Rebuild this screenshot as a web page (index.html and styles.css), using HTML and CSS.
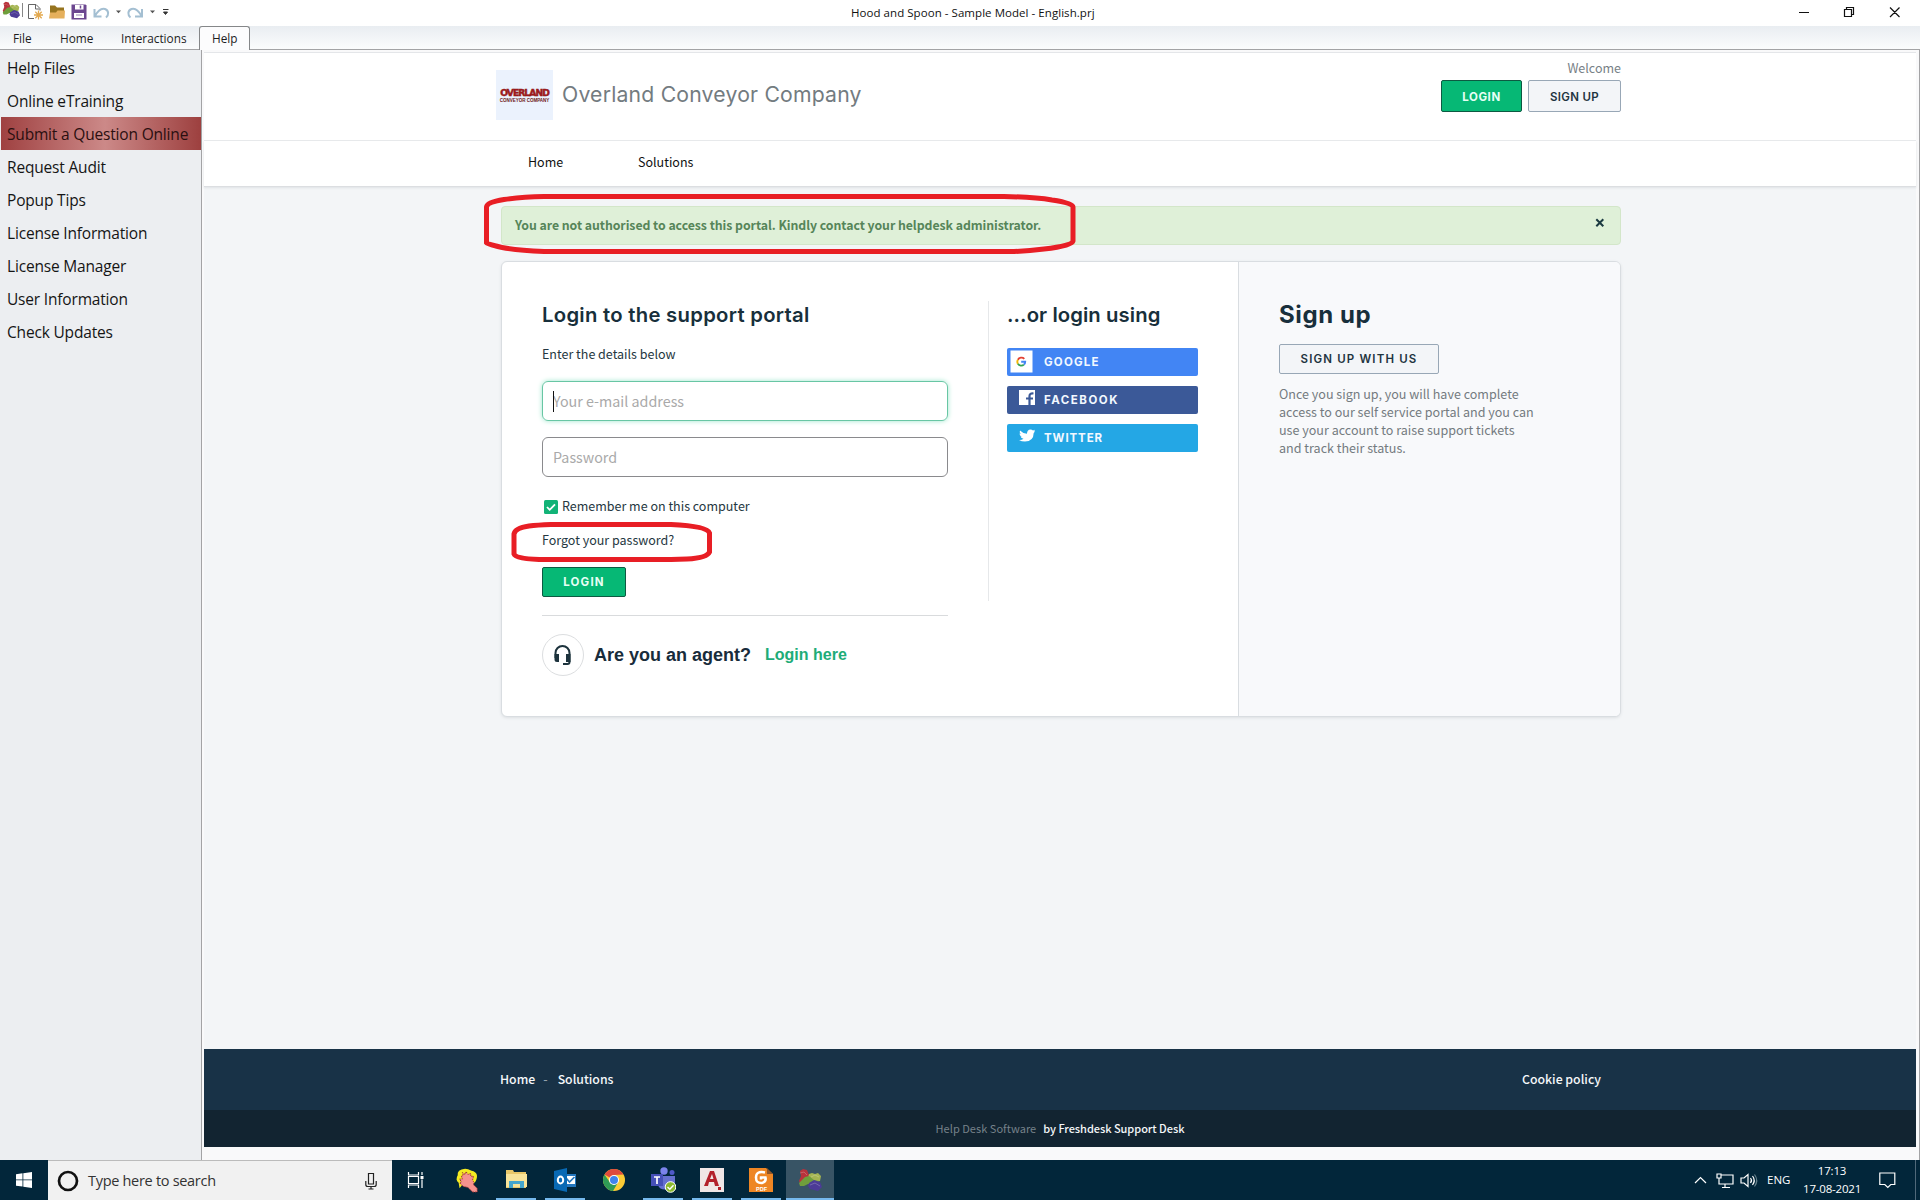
FILE: index.html
```html
<!DOCTYPE html>
<html lang="en">
<head>
<meta charset="utf-8">
<title>Hood and Spoon - Sample Model - English.prj</title>
<link rel="stylesheet" href="styles.css">
</head>
<body>
<svg class="defs" width="0" height="0">
  <symbol id="rocks" viewBox="0 0 24 24">
    <path d="M2 3l3-2 4 1 2 5 2 5-5 2-6 1-1-2 2-5z" fill="#b8323b"/>
    <path d="M11 6l3-1 3 1 3-1 3 3-1 5-5 1-4-1-3-3z" fill="#a5b552"/>
    <path d="M1 15l6-6 4-1 5 4 5 1-6 3-5 0-4 2-4 0z" fill="#6f9e3c"/>
    <path d="M11 15l5-3 6 2 2 5-4 4-8-2-2-3z" fill="#4c3b96"/>
    <path d="M2 5l4-1 3 3M13 9l4-2 4 2M12 17l5-2 5 3" fill="none" stroke="#fff" stroke-opacity=".22"/>
  </symbol>
</svg>
<header class="titlebar">
  <svg class="tools" width="180" height="26" viewBox="0 0 180 26" fill="none">
    <use href="#rocks" x="2" y="1" width="18" height="18"/>
    <path d="M22.500 3v14" stroke="#888"/>
    <path d="M34 18.500h-5.500v-14h7.500l4 4v2M35.500 5v4h4" stroke="#666"/>
    <path d="M38.500 10.500v9M34 15h9M35.300 11.800l6.400 6.400M41.700 11.800l-6.400 6.400" stroke="#e3a94f" stroke-width="1.300"/>
    <path d="M50 5.500h5l2 2h7v10H50z" fill="#96741f"/><path d="M49 18.500l1-6h6l1.500-2H65l-.5 8z" fill="#e5b05c"/>
    <path d="M71.500 4.500h14l1 1v14h-15z" fill="#6c4790"/><path d="M75 5h8.500v4.500H75zM74 13h10v5H74z" fill="#fff"/><path d="M76 15h6" stroke="#9b86b5"/><path d="M80.500 5.500v3" stroke="#6c4790" stroke-width="1.500"/>
    <path d="M94.500 9v7.500h7M95 16c3-5.500 7-8 10-7 4 1.500 4 6 1 8.500" stroke="#a4bfd2" stroke-width="2"/>
    <path d="M116 10.500h5l-2.500 2.800z" fill="#555"/>
    <path d="M142 9v7.500h-7M141.500 16c-3-5.500-7-8-10-7-4 1.500-4 6-1 8.500" stroke="#a4bfd2" stroke-width="2"/>
    <path d="M150 10.500h5l-2.500 2.800z" fill="#555"/>
    <path d="M163 9.500h5.500M163.500 12h4l-2 2.500z" stroke="#333" fill="#333"/>
  </svg>
  <div class="app-title segoe">Hood and Spoon - Sample Model - English.prj</div>
  <svg class="winbtns" width="126" height="26" viewBox="0 0 126 26" fill="none" stroke="#111" stroke-width="1.200">
    <path d="M5 12.500h10M50.500 9.500h7v7h-7zM52.500 9.500v-2h7v7h-2M96 7.500l9.500 9.500M105.500 7.500L96 17"/>
  </svg>
</header>
<nav class="ribbon segoe">
  <span class="tab tab-file">File</span><span class="tab tab-home">Home</span><span class="tab tab-inter">Interactions</span><span class="tab tab-help">Help</span>
</nav>
<div class="workspace">
  <aside class="sidebar segoe">
    <a class="side">Help Files</a>
    <a class="side">Online eTraining</a>
    <a class="side active">Submit a Question Online</a>
    <a class="side">Request Audit</a>
    <a class="side">Popup Tips</a>
    <a class="side">License Information</a>
    <a class="side">License Manager</a>
    <a class="side">User Information</a>
    <a class="side">Check Updates</a>
  </aside>
  <main class="browser">
    <div class="portal source">
      <header class="brandbar">
        <div class="logo">
          <span class="logo-main">OVERLAND</span>
          <span class="logo-sub">CONVEYOR COMPANY</span>
        </div>
        <h1 class="brand pop">Overland Conveyor Company</h1>
        <div class="account">
          <div class="welcome">Welcome</div>
          <div class="account-btns"><a class="btn green pop b-login">LOGIN</a><a class="btn grey pop b-signup">SIGN UP</a></div>
        </div>
      </header>
      <nav class="menu"><a class="m-home">Home</a><a>Solutions</a></nav>
      <section class="content">
        <div class="alert">
          <b class="alert-text">You are not authorised to access this portal. Kindly contact your helpdesk administrator.</b>
          <svg class="alert-x" width="10" height="10" viewBox="0 0 10 10"><path d="M1.300 1.300l7 7M8.300 1.300l-7 7" stroke="#1b3a41" stroke-width="2"/></svg>
          <svg class="mark mark-alert" width="594" height="62" viewBox="0 0 594 62"><path d="M2.500 49V13Q3 8 20 5.500Q38 3 60 2.500H520Q550 3 568 6Q589 9 589 13V47Q588 52 560 55Q545 57 530 57.500H60Q25 56 12 52Q3 50 2.500 49Z"/></svg>
        </div>
        <div class="card">
          <div class="login">
            <h2 class="pop h-login">Login to the support portal</h2>
            <p class="hint">Enter the details below</p>
            <div class="field focus"><i class="caret"></i><span>Your e-mail address</span></div>
            <div class="field"><span>Password</span></div>
            <div class="remember"><svg width="14" height="14" viewBox="0 0 14 14"><rect width="14" height="14" rx="1.500" fill="#12b377"/><path d="M3 7l2.700 2.800L11 4.300" fill="none" stroke="#fff" stroke-width="1.800"/></svg><span>Remember me on this computer</span></div>
            <div class="forgot"><span>Forgot your password?</span>
              <svg class="mark mark-forgot" width="202" height="42" viewBox="0 0 202 42"><path d="M3 32V12Q4 6 18 4Q26 3 40 2.500H160Q196 4 198.500 11V30Q196 36 176 37L160 37.500H40Q5 38 3 32Z"/></svg>
            </div>
            <a class="btn green pop b-submit">LOGIN</a>
            <div class="agent">
              <span class="agent-icon"><svg width="20" height="22" viewBox="0 0 20 22"><path d="M2.500 14V9a7 7 0 0 1 14 0v9q0 2-2 2H10" fill="none" stroke="#1d333d" stroke-width="2"/><path d="M1.500 10H6v8H4q-2.500 0-2.500-2.500zM13 10h4.500v8H13z" fill="#1d333d"/></svg></span>
              <b class="q">Are you an agent?</b><b class="here">Login here</b>
            </div>
          </div>
          <div class="social">
            <h2 class="pop h-or">...or login using</h2>
            <a class="soc google pop"><svg width="29" height="28" viewBox="0 0 29 28"><path d="M3.500 2.500h22v22h-22z" fill="#fff"/><g fill="none" stroke-width="1.900"><path d="M17.300 10.800A4 4 0 0 0 10.900 11.800" stroke="#e34133"/><path d="M10.900 11.800a4 4 0 0 0 0 4" stroke="#f3b605"/><path d="M10.900 15.800a4 4 0 0 0 6 .8" stroke="#34a353"/><path d="M16.900 16.600q1.300-1 1.300-2.800h-4" stroke="#4285f4"/></g></svg><span class="s-g">GOOGLE</span></a>
            <a class="soc facebook pop"><svg width="29" height="28" viewBox="0 0 29 28"><path d="M12 4h16v15H12z" fill="#fff"/><path d="M22.500 19.500V10q0-3 4-2.500M19 12.500h7" fill="none" stroke="#3b5998" stroke-width="2.200"/></svg><span class="s-f">FACEBOOK</span></a>
            <a class="soc twitter pop"><svg width="29" height="28" viewBox="0 0 29 28"><path d="M13 6.500q2.800 3 7 3.200Q20 5.800 23.500 5.500q1.500 0 2.500 1l2-.8-1 1.800 1.200-.2-1.500 1.800Q26.500 17.500 18 17.500q-3.500 0-6-1.500 2.700.2 4.500-1.200-2.300-.2-3-2.200l1.300 0Q12.500 11.800 12.500 9.500l1.300.3Q12 8.300 13 6.500z" fill="#fff"/></svg><span class="s-t">TWITTER</span></a>
          </div>
          <div class="signup">
            <h2 class="pop h-sign">Sign up</h2>
            <a class="btn grey pop b-with">SIGN UP WITH US</a>
            <p class="blurb">Once you sign up, you will have complete<br>access to our self service portal and you can<br>use your account to raise support tickets<br>and track their status.</p>
          </div>
        </div>
      </section>
      <footer class="foot">
        <div class="foot-main"><span>Home</span><span class="f-dash">-</span><span>Solutions</span><span class="f-cookie">Cookie policy</span></div>
        <div class="foot-sub"><span class="f-help">Help Desk Software</span><span class="f-by">by Freshdesk Support Desk</span></div>
      </footer>
    </div>
  </main>
</div>
<footer class="taskbar segoe">
  <div class="start"><svg width="16" height="16" viewBox="0 0 16 16" fill="#fff"><path d="M0 2.200l6.500-.9v6.200H0zM7.300 1.200L16 0v7.500H7.300zM0 8.300h6.500v6.300L0 13.700zM7.300 8.300H16V16l-8.700-1.200z"/></svg></div>
  <div class="search">
    <svg width="22" height="22" viewBox="0 0 22 22"><circle cx="11" cy="11" r="9" fill="none" stroke="#111" stroke-width="2.700"/></svg>
    <span class="t-search">Type here to search</span>
    <svg class="mic" width="12" height="18" viewBox="0 0 12 18" fill="none" stroke="#222" stroke-width="1.200"><path d="M3.500 1.500h5v10.500h-5zM.8 9v3.500q0 2 2 2h6.400q2 0 2-2V9M6 14.500V17M3.500 17h5"/></svg>
  </div>
  <div class="app taskview"><svg width="18" height="18" viewBox="0 0 18 18" fill="none" stroke="#fff" stroke-width="1.200"><path d="M1.500 1v3h10V1M1.500 17v-3h10v3M1.500 5.500h10v7h-10zM15 1v3M15 8.500V17"/><path d="M13.500 5h3v3h-3z" fill="#fff" stroke="none"/></svg></div>
  <div class="app"><svg width="26" height="26" viewBox="0 0 28 26"><path d="M12 1q-9 1-8 7-3 5 1 8l1 6 3-4q8 3 14-3 5-10-4-12-4-2-7-2z" fill="#f4ea22"/><path d="M8 9l2-1-1-3 3 2 1-3 2 3 3-1 0 3 3 0-1 4q2 3 1 5l4 4v4h-5l-5-5-5-1-4-4 2-1-2-3 3 0z" fill="#f5928e" stroke="#912a2b" stroke-width="1" stroke-dasharray="1.500 1"/></svg></div>
  <div class="app open"><svg width="24" height="24" viewBox="0 0 24 24"><path d="M2 2h7l1 2h12v16H2z" fill="#e9c769"/><path d="M2 6h21v13H2z" fill="#f8e399"/><path d="M5 20v-7h15v7h-4v-4H9v4z" fill="#45a5cc"/></svg></div>
  <div class="app open"><svg width="24" height="24" viewBox="0 0 24 24"><path d="M12 6h11v13H12z" fill="#2376bd"/><path d="M13 8h9v8h-9z" fill="#fff"/><path d="M13.500 10.500l3 3.500 5-5" fill="none" stroke="#2376bd" stroke-width="1.700"/><path d="M1 3l13-3v24L1 21z" fill="#0869b4"/><ellipse cx="7.500" cy="12" rx="2.700" ry="3.500" fill="none" stroke="#fff" stroke-width="2"/></svg></div>
  <div class="app"><svg width="24" height="24" viewBox="0 0 24 24"><circle cx="12" cy="12" r="11" fill="#fccb35"/><path d="M12 12L2.500 6.500A11 11 0 0 1 21.500 6.500L12 7z" fill="#df4a3d"/><path d="M2.500 6.500A11 11 0 0 0 11 23l5-8.500-8 0z" fill="#2f9a56"/><circle cx="12" cy="12" r="5" fill="#fff"/><circle cx="12" cy="12" r="4" fill="#3f83ec"/></svg></div>
  <div class="app open"><svg width="26" height="26" viewBox="0 0 26 26"><circle cx="14" cy="4" r="3.700" fill="#7b83eb"/><circle cx="22" cy="5.500" r="2.500" fill="#5059c9"/><path d="M9 9h16v8q-2 5-6 5-9 2-11-4z" fill="#6670d0"/><path d="M1 7h12v12H1z" fill="#4650b8"/><path d="M4 10h6M7 10v7" stroke="#fff" stroke-width="1.700"/><circle cx="20.500" cy="20" r="5.300" fill="#8bb82e" stroke="#fff"/><path d="M17.500 20l2.300 2.200 3.700-4" fill="none" stroke="#fff" stroke-width="1.400"/></svg></div>
  <div class="app open"><svg width="24" height="24" viewBox="0 0 24 24"><path d="M0 0h24v24H0z" fill="#f0e6e6"/><path d="M4 18L10 3h4l5 15h-4l-1-4H9l-1 4zM10 11h3.500l-1.500-5z" fill="#b3202b" fill-rule="evenodd"/><path d="M18 19h3v3h-3z" fill="#b3202b"/></svg></div>
  <div class="app open"><svg width="24" height="24" viewBox="0 0 24 24"><path d="M0 0h17l7 6v18H0z" fill="#ee8624"/><path d="M18 0l6 6h-6z" fill="#8f572b"/><path d="M16 4.500q-9-2-9 5 0 6 6 5.500 4.500-1.500 3.500-5.500H12v2" fill="none" stroke="#fff" stroke-width="2.500"/><text class="pdf" x="7" y="22.500">PDF</text></svg></div>
  <div class="app current"><svg width="24" height="24"><use href="#rocks" width="24" height="24"/></svg></div>
  <div class="tray">
    <svg width="66" height="20" viewBox="0 0 66 20" fill="none" stroke="#fff" stroke-width="1.200"><path d="M1 13l5.500-5.500L12 13M27 5h12v9H25V10M31 14v3M28 17.500h8M23 4h4v4h-4zM25 8v3M47 8h3l4-3.500v12L50 13h-3zM56.500 8q2 2.500 0 5M58.500 6q3.500 4.500 0 9"/><path d="M60.500 4.500q4.500 6 0 12" stroke="#65808b"/></svg>
    <span class="eng">ENG</span>
    <div class="clock"><span class="time">17:13</span><span class="date">17-08-2021</span></div>
    <svg class="note" width="17" height="17" viewBox="0 0 17 17" fill="none" stroke="#fff" stroke-width="1.200"><path d="M.8 1h15v11.500h-4l-3 3-3-3h-5z"/></svg>
    <i class="peek"></i>
  </div>
</footer>
</body>
</html>
```
FILE: styles.css
```css
*{box-sizing:border-box}
body{margin:0;width:1920px;height:1200px;overflow:hidden;display:flex;flex-direction:column;background:#fff;white-space:nowrap}
h1,h2,p{margin:0}
svg{display:block;flex:none}
.defs{position:absolute}
.segoe{font-family:"Open Sans","Noto Sans",sans-serif}
.source{font-family:"Noto Sans CJK SC","Noto Sans",sans-serif}
.pop{font-family:Inter,"Open Sans",sans-serif}
.titlebar{height:26px;display:flex;justify-content:space-between;flex:none}
.app-title{font-size:11.5px;line-height:25px;letter-spacing:.05px;color:#111;flex:1;padding-left:671px}
.ribbon{height:24px;display:flex;background:linear-gradient(#e9edf1,#fbfcfd);font-size:11.8px;line-height:25px;color:#1d1d1d;border-bottom:1px solid #a3a3a5;flex:none}
.tab{flex:none}
.tab-file{width:60px;padding-left:13px}
.tab-home{width:61px}
.tab-inter{width:78px}
.tab-help{width:51px;height:24px;border:1px solid #858789;border-bottom:0;border-radius:3px 3px 0 0;background:#fcfcfd;padding-left:12px;line-height:23px}
.workspace{height:1110px;display:flex;flex:none}
.sidebar{width:202px;background:#eceef1;border-right:1px solid #a3a3a5;padding:1px 0 0 1px;flex:none}
.side{display:block;height:33px;line-height:34px;padding-left:6px;font-size:15.5px;letter-spacing:-.18px;color:#151515}
.active{background:linear-gradient(90deg,#9f4141,#cc8988 52%,#9d403f);color:#2a0f10}
.browser{flex:1;padding:2px 3px 13px 2px;background:#f9f9fa;border-right:1px solid #a3a3a5}
.portal{height:1095px;background:#f3f5f7;border-top:1px solid #e4e6e9;display:flex;flex-direction:column}
.brandbar{height:88px;background:#fff;border-bottom:1px solid #e8eaec;padding:17px 295px 0 292px;display:flex}
.logo{width:57px;height:50px;background:#ebf2fd;display:flex;flex-direction:column;align-items:center;padding-top:17px}
.logo-main{font:900 9.2px/11px "DejaVu Sans",sans-serif;letter-spacing:-.95px;color:#a51b1d;-webkit-text-stroke:.5px #8c1517}
.logo-sub{font:700 4.5px/6px "Liberation Sans",sans-serif;color:#6b1515}
.brand{font-size:21.2px;letter-spacing:.2px;font-weight:400;color:#737b80;padding-left:9px;line-height:49px}
.account{margin-left:auto;margin-top:-13px;text-align:right;color:#777f86}
.welcome{font-size:12.5px;line-height:22px;height:23px}
.account-btns{display:flex;gap:6px}
.btn{display:flex;align-items:center;justify-content:center;height:32px;border:1px solid;border-radius:2px;font-size:11.5px;font-weight:700;padding-top:1px;flex:none}
.green{background:#06b875;border-color:#0d5a42;color:#e7fff5}
.grey{background:#f3f5f8;border-color:#98a7b6;color:#1e3440;font-weight:600}
.b-login{width:81px;letter-spacing:.55px}
.b-signup{width:93px;letter-spacing:.35px}
.menu{height:46px;background:#fff;border-bottom:1px solid #dcdee1;box-shadow:0 1px 2px #dfe2e5;padding-left:324px;display:flex;font-size:12.5px;line-height:42px;color:#111}
.m-home{width:110px}
.content{flex:1;padding:19px 295px 0 297px}
.alert{position:relative;height:39px;background:#dff0d8;border:1px solid #d3e6c9;border-radius:4px;display:flex;justify-content:space-between;padding:0 15px 0 13px;color:#568559;font-size:12.3px;line-height:37px}
.alert-text{font-weight:700;letter-spacing:-.05px}
.alert-x{margin-top:11px}
.mark{position:absolute;fill:none;stroke:#e81e25;stroke-width:5}
.mark-alert{left:-18px;top:-13px}
.mark-forgot{left:-31px;top:-8px}
.card{margin-top:16px;height:456px;background:#fff;border:1px solid #d9dde1;border-radius:6px;box-shadow:0 1px 3px #dcdfe2;display:flex;overflow:hidden;color:#253741}
.login{width:447px;padding:38px 0 0 40px}
.h-login,.h-or{font-size:20.3px;font-weight:600;line-height:30px;color:#182f3b}
.h-login{letter-spacing:.28px}
.h-or{margin-bottom:18px;letter-spacing:.08px}
.hint{font-size:12.5px;line-height:20px;margin-top:14px}
.field{position:relative;width:406px;height:40px;border:1px solid #8a8a8d;border-radius:6px;margin-top:16px;padding-left:10px;line-height:38px;font-size:14.3px;color:#a9a9a9}
.hint + .field{margin-top:17px}
.focus{border-color:#68c6a4;box-shadow:0 0 5px #9ce6cb}
.caret{position:absolute;left:10px;top:9px;width:1px;height:21px;background:#111}
.remember{display:flex;align-items:center;gap:4px;height:20px;margin:19px 0 0 2px;font-size:12.5px;line-height:18px}
.remember svg{margin-top:1px}
.remember span{margin-top:-1px}
.forgot{position:relative;height:20px;line-height:20px;font-size:12.5px;margin-top:14px}
.b-submit{width:84px;height:30px;margin-top:17px;letter-spacing:1.2px;padding-top:0}
.agent{border-top:1px solid #d9dbdd;margin-top:18px;width:406px;display:flex;align-items:center;padding-top:18px;font-family:"Liberation Sans",Arial,sans-serif;color:#182c3b}
.agent-icon{width:42px;height:42px;border:1px solid #dcdee0;border-radius:50%;display:grid;place-items:center}
.q{font-size:18px;margin-left:10px}
.here{font-size:16px;margin-left:14px;color:#1eac78}
.social{width:289px;padding:38px 0 0 58px;background:linear-gradient(#e6e8ea,#e6e8ea) 39px 39px/1px 300px no-repeat}
.soc{display:flex;width:191px;height:28px;border-radius:2px;margin-bottom:10px;color:#f2f8ff;font-size:11.5px;font-weight:700;line-height:28px}
.soc span{margin-left:8px}
.s-g{letter-spacing:1.2px}
.s-f{letter-spacing:1.5px}
.s-t{letter-spacing:.9px}
.google{background:#4285f4}
.facebook{background:#3b5998}
.twitter{background:#24a7e5}
.signup{flex:1;background:#f8f9fb;border-left:1px solid #d9dde1;padding:36px 0 0 40px}
.h-sign{font-size:24px;line-height:34px;letter-spacing:.6px;color:#182f3b}
.b-with{width:160px;height:30px;margin-top:12px;letter-spacing:1.15px;padding-top:0}
.blurb{margin-top:11px;font-size:12.55px;line-height:18px;color:#747b80}
.foot{flex:none;color:#f5f8fa}
.foot-main{height:61px;background:#183247;padding:0 315px 0 296px;display:flex;font-size:12.3px;line-height:60px;font-weight:500}
.f-dash{margin:0 10px 0 8px;color:#93a1ac}
.f-cookie{margin-left:auto}
.foot-sub{height:37px;background:#122431;display:flex;justify-content:center;gap:7px;font-size:11px;line-height:36px}
.f-help{color:#76828a;letter-spacing:.04px}
.f-by{font-weight:500;letter-spacing:-.04px}
.taskbar{height:40px;background:#02263a;display:flex;flex:none;color:#fff}
.start{width:48px;display:grid;place-items:center}
.search{width:344px;background:#f1f1f1;border-top:1px solid #bbb;display:flex;align-items:center;padding:0 15px 0 9px;font-size:14.5px;color:#333}
.search svg{margin-top:1px}
.t-search{margin-left:9px;letter-spacing:-.3px}
.search .mic{margin-left:auto}
.app{width:49px;display:grid;place-items:center;position:relative;padding-right:2px}
.taskview{width:48px;margin-right:3px;padding-right:0}
.open::after,.current::after{content:"";position:absolute;bottom:0;left:4px;right:5px;height:2px;background:#76b9ed}
.current{width:48px;padding-right:0;background:#385465}
.current::after{left:0;right:0}
.pdf{font:700 5.500px "Liberation Sans",sans-serif;fill:#fff}
.tray{margin-left:auto;display:flex;align-items:center;font-size:12px}
.eng{width:23px;margin:-2px 14px 0 7px;font-size:11.5px}
.clock{width:56px;display:flex;flex-direction:column;align-items:center;line-height:18px;font-size:11.500px;letter-spacing:-.2px}
.note{margin-left:19px}
.peek{width:1px;height:40px;background:#50697a;margin:0 4px 0 19px}
```
